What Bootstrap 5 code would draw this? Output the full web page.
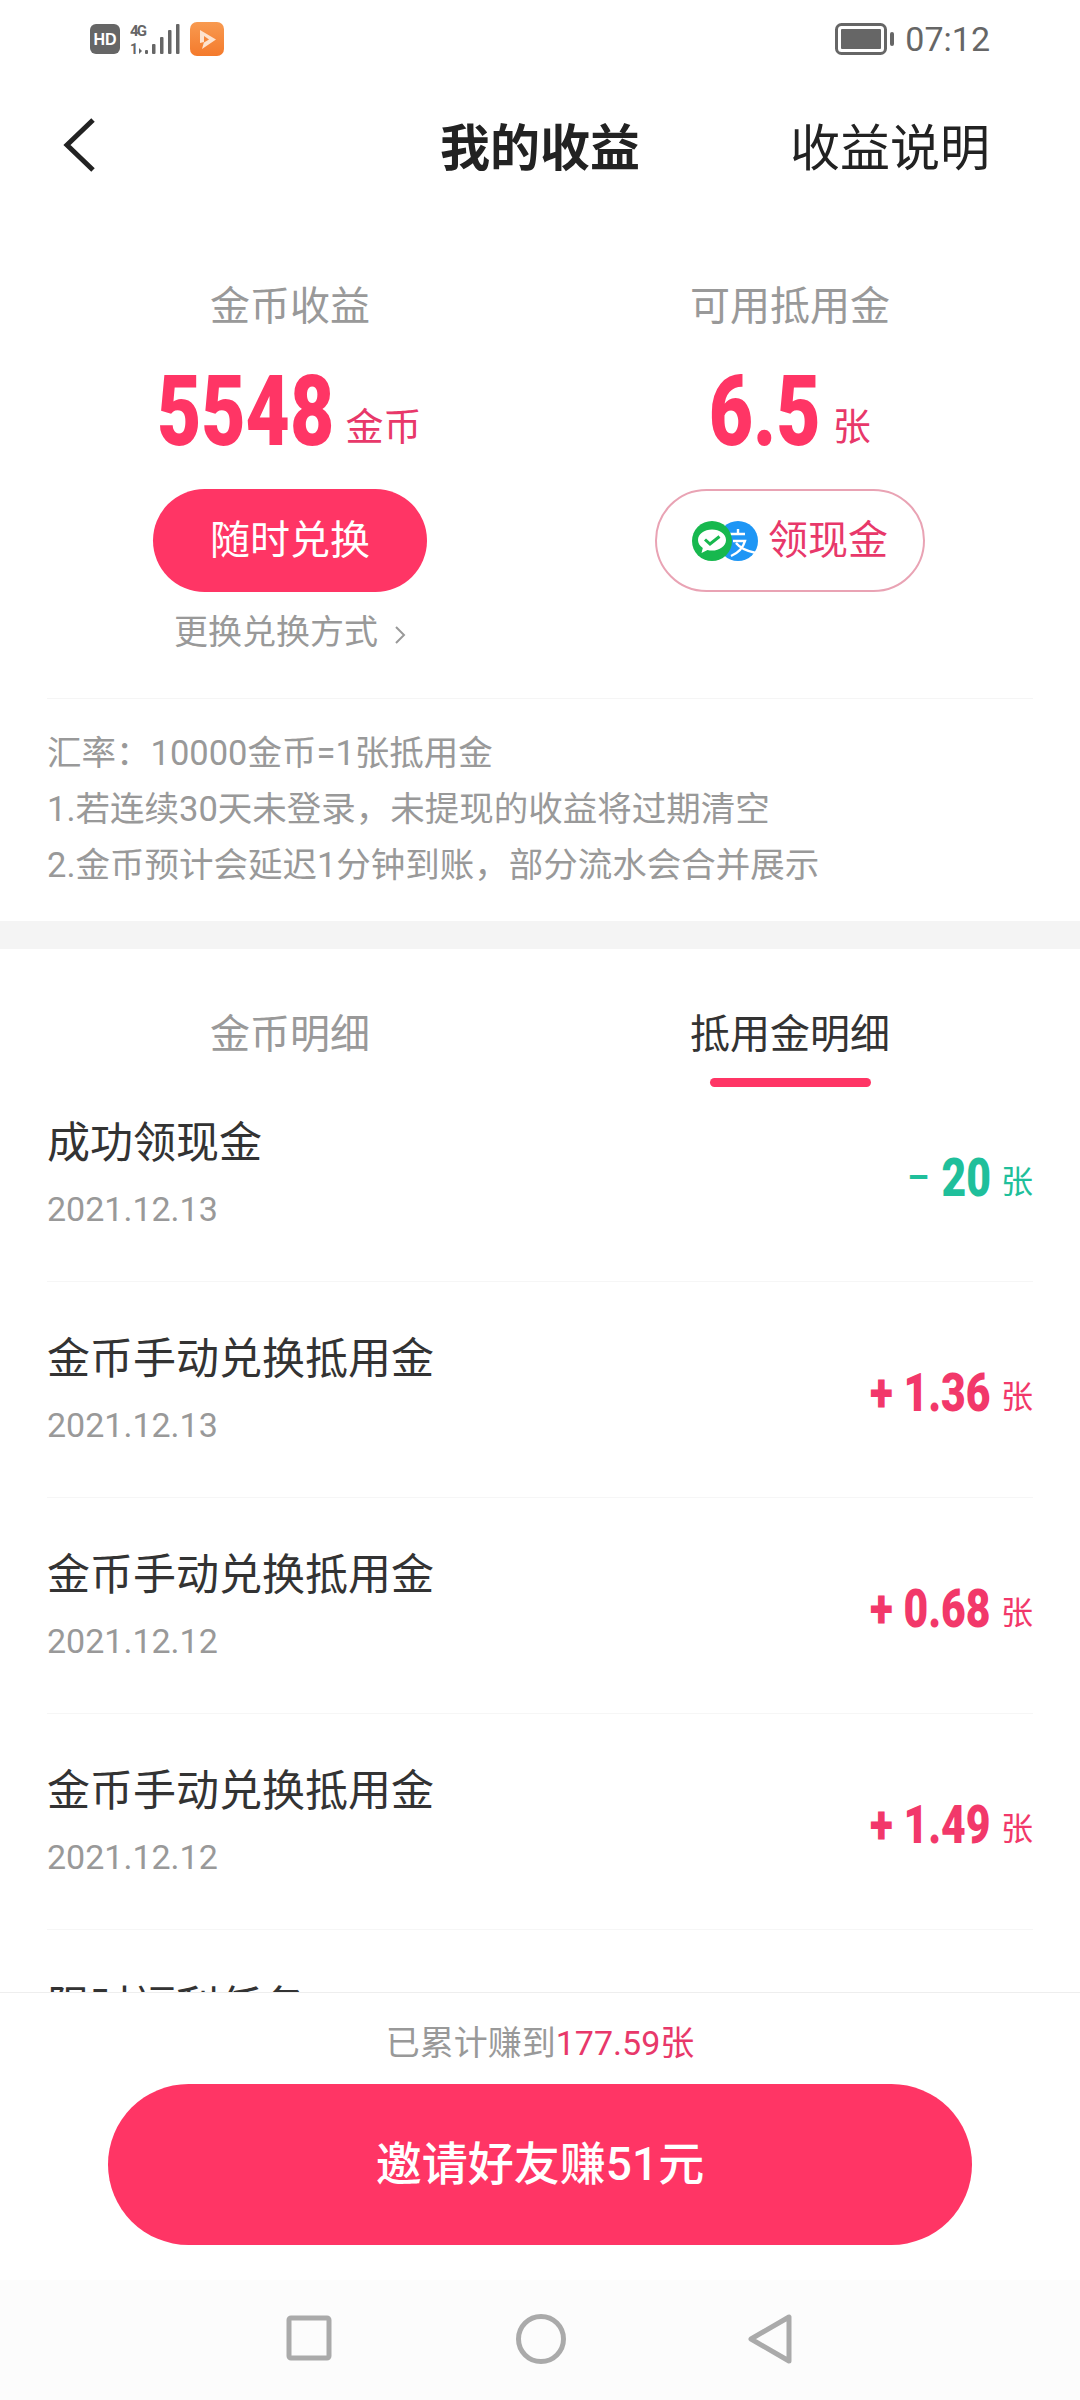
<!doctype html>
<html lang="zh">
<head>
<meta charset="utf-8">
<link href="https://cdn.jsdelivr.net/npm/bootstrap@5.3.0/dist/css/bootstrap.min.css" rel="stylesheet">
<style>
html,body{margin:0;background:#fff}
.phone{width:1080px;height:2400px;overflow:hidden;font-family:Roboto,"Noto Sans CJK SC",sans-serif;color:#222}
.sbar{height:78px;padding:0 90px;color:#666}
.sicons{gap:10px}
.clock{font-size:34px;color:#666;line-height:1;margin-left:10px}
.topnav{height:134px;padding:0 90px 0 62px;position:relative}
.topnav-title{font-size:50px;font-weight:700;position:absolute;left:0;right:0;text-align:center;line-height:1.2;color:#222;padding-top:8px}
.topnav-link{font-size:50px;color:#222;line-height:1.2;padding-top:8px}
.stats{height:486px;padding:0 40px}
.stat-col{width:500px;padding-top:67px}
.lab{font-size:40px;color:#999;line-height:56px;text-align:center}
.valrow{margin-top:28px;height:98px;line-height:98px;white-space:nowrap;text-align:center}
.big{display:inline-block;font-weight:900;font-size:98px;line-height:98px;color:#ff3565;transform:scaleX(.78)}
.big-a{margin:0 -26px}
.big-b{margin:0 -16px}
.unit{font-size:38px;color:#e8386a;margin-left:12px;line-height:1;vertical-align:5px}
.pillbtn{height:103px;border-radius:52px;font-size:40px;line-height:1;padding:0;margin-top:28px}
.pill-a{width:274px;background:#ff3565;color:#fff;border:0}
.pill-b{width:270px;background:#fff;color:#e8386a;border:2px solid #e9a3b4;gap:10px}
.changer{font-size:34px;color:#999;line-height:48px;margin-top:16px}
.rule{height:1px;background:#f5f5f5;margin:0 47px}
.notes{padding:26px 47px 0;height:222px;font-size:34.5px;line-height:56px;color:#999}
.band{height:28px;background:#f4f4f4}
.tabsrow{height:142px;padding:0 40px}
.tabcell{width:500px;position:relative;padding-top:57px;font-size:40px;line-height:58px;color:#999;text-align:center}
.tabcell.on{color:#333}
.tabbar{display:block;width:161px;height:9px;background:#ff3565;border-radius:5px;margin:14px auto 0}
.rows{height:901px;overflow:hidden;padding:0 47px}
.rowitem{height:216px;border-bottom:1px solid #f6f6f6;position:relative}
.rowitem.first{height:191px}
.rowtext{padding-top:49px}
.rowitem.first .rowtext{padding-top:24px}
.rowtitle{font-size:43px;line-height:56px;color:#333}
.rowdate{font-size:34px;line-height:48px;color:#999;margin-top:14px}
.amt{font-weight:900;font-size:54px;line-height:60px;color:#f2386a}
.amt-num{display:inline-block;transform:scaleX(.79);transform-origin:right center;white-space:pre}
.amt-unit{font-weight:400;font-size:32px;margin-left:10px;vertical-align:3px}
.amt-wrap{padding-top:81px}
.rowitem.first .amt-wrap{padding-top:57px}
.teal{color:#1fbf9b}
.foot{height:288px;border-top:1px solid #eee;background:#fff;text-align:center;padding-top:26px}
.foot-total{font-size:34px;line-height:48px;color:#999}
.foot-total span{color:#e8386a}
.invite{display:block;width:864px;height:161px;margin:17px auto 0;border-radius:81px;background:#ff3565;color:#fff;font-size:46px;font-weight:500;border:0;padding:0}
.sysnav{height:120px;background:#fcfcfc;padding:34px 4px 0 0}
.sys-a{margin-right:183px}
.sys-c{margin-left:182px}
</style>
</head>
<body>
<div class="phone">
 <div class="sbar d-flex justify-content-between align-items-center">
  <div class="sicons d-flex align-items-center">
   <svg width="30" height="30" viewBox="0 0 30 30"><rect width="30" height="30" rx="6" fill="#666"/><text x="15" y="21" font-family="Liberation Sans" font-weight="700" font-size="16" fill="#fff" text-anchor="middle">HD</text></svg>
   <svg width="50" height="34" viewBox="0 0 50 34"><text x="0" y="14" font-family="Roboto" font-weight="700" font-size="15" textLength="17" fill="#666">4G</text><text x="0" y="32" font-family="Roboto" font-weight="700" font-size="14" fill="#666">1</text><path d="M9 26l3 3-3 3z" fill="#666"/><rect x="15" y="28" width="3" height="4" rx="1" fill="#666"/><rect x="22" y="22" width="3.500" height="10" rx="1" fill="#666"/><rect x="30" y="15" width="3.500" height="17" rx="1" fill="#666"/><rect x="38" y="8" width="3.500" height="24" rx="1" fill="#666"/><rect x="46" y="2" width="3.500" height="30" rx="1" fill="#666"/></svg>
   <svg width="34" height="34" viewBox="0 0 34 34"><defs><linearGradient id="og" x1="0" y1="0" x2="0" y2="1"><stop offset="0" stop-color="#f89a50"/><stop offset="1" stop-color="#f47a2c"/></linearGradient></defs><rect width="34" height="34" rx="7" fill="url(#og)"/><path d="M10 8l16 9.500-14 9.500 2-7-4 1z" fill="#fde3cf"/><path d="M14 14l5 3.500-5 3z" fill="#f5873a"/></svg>
  </div>
  <div class="d-flex align-items-center">
   <svg width="60" height="32" viewBox="0 0 60 32"><rect x="1.500" y="1.500" width="49" height="29" rx="5" fill="none" stroke="#666" stroke-width="3"/><rect x="6" y="6" width="40" height="20" rx="1" fill="#666"/><rect x="55" y="9" width="4" height="14" rx="2" fill="#666"/></svg>
   <span class="clock">07:12</span>
  </div>
 </div>

 <div class="topnav d-flex justify-content-between align-items-center">
  <svg width="36" height="56" viewBox="0 0 36 56"><path d="M31 3L5 28l26 25" fill="none" stroke="#222" stroke-width="5"/></svg>
  <div class="topnav-title">我的收益</div>
  <div class="topnav-link">收益说明</div>
 </div>

 <div class="stats d-flex">
  <div class="stat-col d-flex flex-column align-items-center">
   <div class="lab">金币收益</div>
   <div class="valrow"><span class="big big-a">5548</span><span class="unit">金币</span></div>
   <button class="btn pillbtn pill-a">随时兑换</button>
   <div class="changer">更换兑换方式<svg class="ms-3" width="12" height="24" viewBox="0 0 12 24"><path d="M2 4l8 8-8 8" fill="none" stroke="#999" stroke-width="2"/></svg></div>
  </div>
  <div class="stat-col d-flex flex-column align-items-center">
   <div class="lab">可用抵用金</div>
   <div class="valrow"><span class="big big-b">6.5</span><span class="unit">张</span></div>
   <button class="btn pillbtn pill-b d-flex align-items-center justify-content-center">
    <svg width="66" height="40" viewBox="0 0 66 40"><circle cx="46" cy="20" r="20" fill="#1e96f5"/><path d="M38 13h15M46 8v5M41 20h12c-2 7-7 12-14 15M44 22c4 5 10 8 20 10" fill="none" stroke="#fff" stroke-width="2.400"/><circle cx="20" cy="20" r="20" fill="#17b84e"/><path d="M20 8.500C12.500 8.500 6 13 6 19c0 3.200 1.800 6 4.800 8L9.500 32l6-3c1.400.4 2.900.6 4.500.6 7.500 0 14-4.700 14-10.600S27.500 8.500 20 8.500z" fill="#fff"/><path d="M13 18.500l5 4.500 9.500-7.500" fill="none" stroke="#17b84e" stroke-width="3"/></svg>
    <span>领现金</span>
   </button>
  </div>
 </div>
 <div class="rule"></div>
 <div class="notes">
  <div>汇率&#xFF1A;10000金币=1张抵用金</div>
  <div>1.若连续30天未登录&#xFF0C;未提现的收益将过期清空</div>
  <div>2.金币预计会延迟1分钟到账&#xFF0C;部分流水会合并展示</div>
 </div>
 <div class="band"></div>
 <div class="tabsrow d-flex">
  <div class="tabcell">金币明细</div>
  <div class="tabcell on">抵用金明细<span class="tabbar"></span></div>
 </div>
 <div class="rows">
  <div class="rowitem first d-flex justify-content-between">
   <div class="rowtext"><div class="rowtitle">成功领现金</div><div class="rowdate">2021.12.13</div></div>
   <div class="amt-wrap"><span class="amt teal"><span class="amt-num"><span class="fw-normal">−</span> 20</span><span class="amt-unit">张</span></span></div>
  </div>
  <div class="rowitem d-flex justify-content-between">
   <div class="rowtext"><div class="rowtitle">金币手动兑换抵用金</div><div class="rowdate">2021.12.13</div></div>
   <div class="amt-wrap"><span class="amt"><span class="amt-num">+ 1.36</span><span class="amt-unit">张</span></span></div>
  </div>
  <div class="rowitem d-flex justify-content-between">
   <div class="rowtext"><div class="rowtitle">金币手动兑换抵用金</div><div class="rowdate">2021.12.12</div></div>
   <div class="amt-wrap"><span class="amt"><span class="amt-num">+ 0.68</span><span class="amt-unit">张</span></span></div>
  </div>
  <div class="rowitem d-flex justify-content-between">
   <div class="rowtext"><div class="rowtitle">金币手动兑换抵用金</div><div class="rowdate">2021.12.12</div></div>
   <div class="amt-wrap"><span class="amt"><span class="amt-num">+ 1.49</span><span class="amt-unit">张</span></span></div>
  </div>
  <div class="rowitem d-flex justify-content-between">
   <div class="rowtext"><div class="rowtitle">限时福利任务</div></div>
  </div>
 </div>
 <div class="foot">
  <div class="foot-total">已累计赚到<span>177.59张</span></div>
  <button class="btn invite">邀请好友赚51元</button>
 </div>
 <div class="sysnav d-flex justify-content-center align-items-start">
  <svg class="sys-a" width="48" height="48" viewBox="0 0 48 48"><rect x="4" y="4" width="40" height="40" rx="2" fill="none" stroke="#aaa" stroke-width="5"/></svg>
  <svg width="50" height="50" viewBox="0 0 50 50"><circle cx="25" cy="25" r="22.500" fill="none" stroke="#aaa" stroke-width="5"/></svg>
  <svg class="sys-c" width="44" height="50" viewBox="0 0 44 50"><path d="M41 3v44L3 25z" fill="none" stroke="#aaa" stroke-width="5" stroke-linejoin="round"/></svg>
 </div>
</div>
<script src="https://cdn.jsdelivr.net/npm/bootstrap@5.3.0/dist/js/bootstrap.bundle.min.js"></script>
</body>
</html>
